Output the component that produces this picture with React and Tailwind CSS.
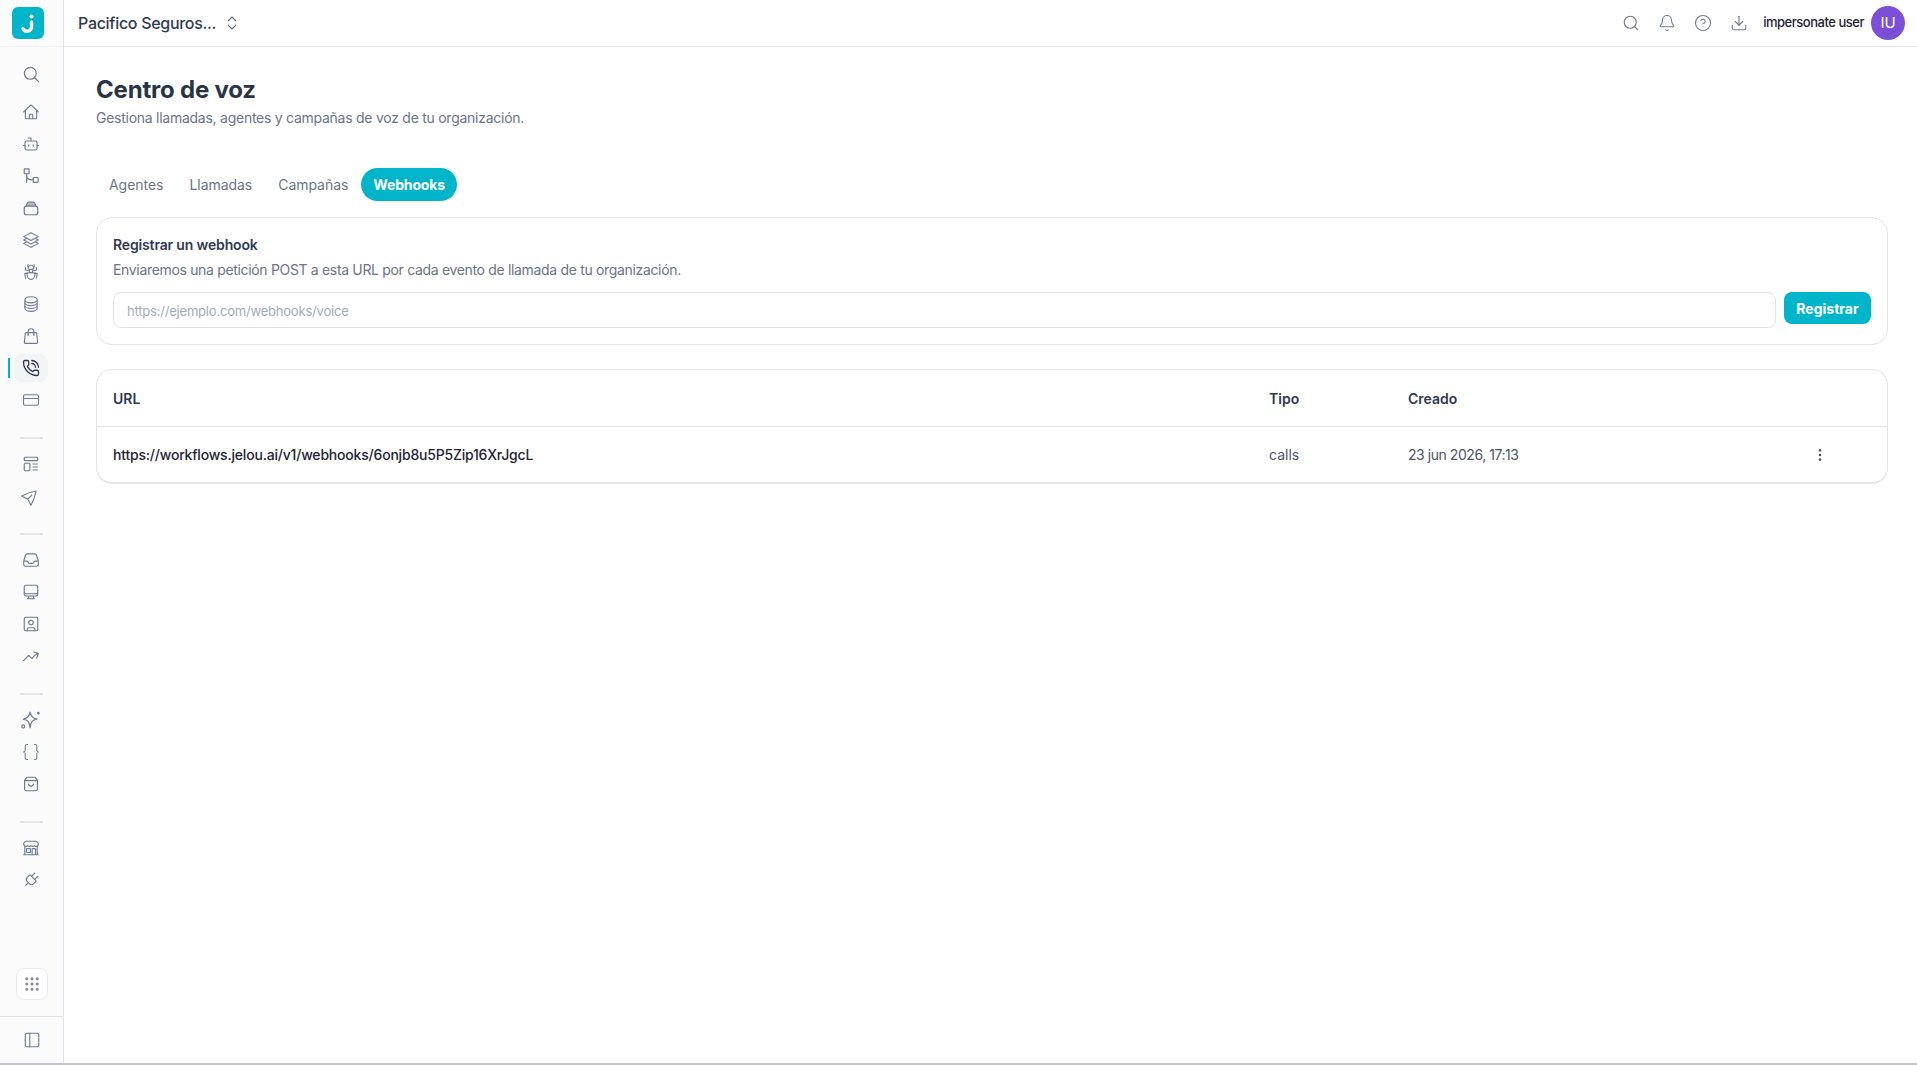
import { Search, Bell, CircleHelp, Download, ChevronsUpDown, Bot, Braces, Plug, PanelLeft, Grip, EllipsisVertical, PhoneCall, CreditCard, SquareUser } from 'lucide-react';
import {
  HiOutlineMagnifyingGlass, HiOutlineHome, HiOutlineSquare3Stack3D, HiOutlineBugAnt, HiOutlineCircleStack,
  HiOutlineShoppingBag, HiOutlinePaperAirplane, HiOutlineInbox, HiOutlineComputerDesktop,
  HiOutlineArrowTrendingUp, HiOutlineBuildingStorefront,
} from 'react-icons/hi2';

function FlowIcon(props) {
  return (
    <svg viewBox="0 0 24 24" fill="none" stroke="currentColor" strokeWidth="1.6" {...props}>
      <rect x="3" y="2.5" width="6.5" height="6.5" rx="0.8" />
      <rect x="15" y="14" width="6.5" height="6.5" rx="0.8" />
      <path d="M6.200 9v12M6.200 12c0 3 3 5.200 8.800 5.200" />
    </svg>
  );
}

function StackBoxIcon(props) {
  return (
    <svg viewBox="0 0 24 24" fill="none" stroke="currentColor" strokeWidth="1.6" {...props}>
      <rect x="3" y="9.500" width="18" height="11.500" rx="3" />
      <path d="M5.500 9.500 7 5.500A2 2 0 0 1 8.900 4h6.200A2 2 0 0 1 17 5.500l1.500 4" fill="currentColor" fillOpacity="0.5" />
    </svg>
  );
}

function TemplateIcon(props) {
  return (
    <svg viewBox="0 0 24 24" fill="none" stroke="currentColor" strokeWidth="1.6" {...props}>
      <rect x="3" y="3" width="18" height="4.500" rx="1.200" />
      <rect x="3" y="11" width="7.500" height="10" rx="1.200" />
      <path d="M14 12h7M14 16h7M14 20h7" />
    </svg>
  );
}

function CartBagIcon(props) {
  return (
    <svg viewBox="0 0 24 24" fill="none" stroke="currentColor" strokeWidth="1.600" {...props}>
      <path d="M3.500 7 6.500 3h11l3 4v12a2 2 0 0 1-2 2h-13a2 2 0 0 1-2-2Z" />
      <path d="M3.500 7.500h17M8.500 11.500c.4 2.200 1.800 3.200 3.500 3.200s3.100-1 3.500-3.200" />
    </svg>
  );
}

function SparkleIcon(props) {
  return (
    <svg viewBox="0 0 24 24" fill="none" stroke="currentColor" strokeWidth="1.300" strokeLinejoin="round" {...props}>
      <path d="M11 3.500c.7 4.800 2.700 6.800 7.500 7.500-4.800.7-6.800 2.700-7.500 9.500-.7-6.800-2.700-8.800-7.500-9.500 4.800-.7 6.800-2.700 7.500-7.500Z" />
      <circle cx="20" cy="4.500" r="1.400" fill="currentColor" stroke="none" />
      <circle cx="3.500" cy="19" r="1.600" />
    </svg>
  );
}

function JelouLogo() {
  return (
    <div className="mr-[7px] w-8 h-8 rounded-md bg-[#00b5c9] flex items-center justify-center">
      <svg viewBox="0 0 32 32" className="w-8 h-8" fill="none" stroke="white" strokeWidth="3.400" strokeLinecap="round">
        <circle cx="19.500" cy="9.500" r="2" fill="white" stroke="none" />
        <path d="M19.500 15v5a4.500 4.500 0 0 1-8.500 1.800" />
      </svg>
    </div>
  );
}

const groups = [
  [
    { Icon: HiOutlineHome },
    { Icon: Bot, stroke: 1.5 },
    { Icon: FlowIcon },
    { Icon: StackBoxIcon },
    { Icon: HiOutlineSquare3Stack3D },
    { Icon: HiOutlineBugAnt },
    { Icon: HiOutlineCircleStack },
    { Icon: HiOutlineShoppingBag },
    { Icon: PhoneCall, stroke: 1.75, active: true },
    { Icon: CreditCard, stroke: 1.5 },
  ],
  [{ Icon: TemplateIcon }, { Icon: HiOutlinePaperAirplane, cls: 'w-[18px] h-[18px] -rotate-45' }],
  [
    { Icon: HiOutlineInbox },
    { Icon: HiOutlineComputerDesktop },
    { Icon: SquareUser, stroke: 1.5 },
    { Icon: HiOutlineArrowTrendingUp },
  ],
  [
    { Icon: SparkleIcon, cls: 'w-[22px] h-[22px]' },
    { Icon: Braces, stroke: 1.25, cls: 'w-5 h-5' },
    { Icon: CartBagIcon },
  ],
  [{ Icon: HiOutlineBuildingStorefront }, { Icon: Plug, stroke: 1.5, cls: 'w-[18px] h-[18px] rotate-45' }],
];

function NavItem({ Icon, stroke, active, cls }) {
  const extra = stroke ? { strokeWidth: stroke } : {};
  return (
    <div className="relative h-8 flex items-center justify-center pr-px">
      {active && <span className="absolute left-2 top-[6px] w-0.5 h-5 bg-[#00b5c9]" />}
      <div className={active ? 'w-[34px] h-7 rounded-lg bg-[#f3f4f6] flex items-center justify-center text-[#2c3650]' : 'w-[34px] h-7 flex items-center justify-center text-[#6f7a98]'}>
        <Icon className={cls || 'w-[18px] h-[18px]'} {...extra} />
      </div>
    </div>
  );
}

function Sidebar() {
  return (
    <aside className="w-16 shrink-0 flex flex-col border-r border-[#e1e3e9] bg-[#fbfbfc]">
      <div className="h-[47px] shrink-0 flex items-center justify-center border-b border-[#f0f1f4]">
        <JelouLogo />
      </div>
      <div className="mt-[11px] h-8 shrink-0 flex items-center justify-center text-[#6f7a98]">
        <HiOutlineMagnifyingGlass className="w-[19px] h-[19px]" />
      </div>
      <div className="mt-1.5 flex flex-col">
        {groups.map((group, i) => (
          <div key={i}>
            {i > 0 && <div className="mt-[21px] mb-[9px] mx-5 h-0.5 bg-[#e3e4e9]" />}
            {group.map((item, j) => <NavItem key={j} {...item} />)}
          </div>
        ))}
      </div>
      <div className="mt-auto flex justify-center pb-4">
        <button className="w-8 h-8 rounded-lg border border-[#e8eaf0] bg-white flex items-center justify-center text-[#7f89a5]">
          <Grip className="w-[18px] h-[18px]" strokeWidth={2} />
        </button>
      </div>
      <div className="h-[47px] shrink-0 border-t border-[#e1e3e9] flex items-center justify-center text-[#6f7a98]">
        <PanelLeft className="w-[18px] h-[18px]" strokeWidth={1.5} />
      </div>
    </aside>
  );
}

function Header() {
  return (
    <header className="h-[47px] shrink-0 border-b border-[#e1e3e9] flex items-center justify-between pl-[14px] pr-3 bg-white">
      <div className="flex items-center gap-[7px] text-[#2f3a50]">
        <span className="text-[16px] font-medium tracking-[-0.3px]">Pacifico Seguros...</span>
        <ChevronsUpDown className="w-[18px] h-[18px] text-[#5f6b85]" strokeWidth={1.5} />
      </div>
      <div className="flex items-center">
        <div className="flex items-center gap-[18px] text-[#6f7a98]">
          <Search className="w-[18px] h-[18px]" strokeWidth={1.5} />
          <Bell className="w-[18px] h-[18px]" strokeWidth={1.5} />
          <CircleHelp className="w-[18px] h-[18px]" strokeWidth={1.5} />
          <Download className="w-[18px] h-[18px]" strokeWidth={1.5} />
        </div>
        <span className="ml-[15px] text-[13px] font-medium tracking-[-0.48px] text-[#1c2433]">impersonate user</span>
        <div className="ml-[7px] w-[34px] h-[34px] rounded-full bg-[#7c4fd9] flex items-center justify-center text-white text-[15px]">IU</div>
      </div>
    </header>
  );
}

function Tabs() {
  return (
    <div className="mt-10 h-[33px] flex items-center text-[14px] tracking-[-0.04px] text-[#6b7488]">
      <span className="px-[13px]">Agentes</span>
      <span className="px-[13px]">Llamadas</span>
      <span className="px-[13px]">Campañas</span>
      <span className="h-[33px] px-3 rounded-full bg-[#00b5c9] text-white font-bold tracking-[-0.15px] flex items-center">Webhooks</span>
    </div>
  );
}

function RegisterCard() {
  return (
    <section className="mt-4 h-[128px] rounded-2xl border border-[#e4e5ea] px-4 pt-[17px]">
      <h2 className="text-[14px] font-semibold leading-5 tracking-[-0.15px] text-[#2f3a50]">Registrar un webhook</h2>
      <p className="mt-[5px] text-[14px] leading-5 tracking-[-0.33px] text-[#6b7488]">Enviaremos una petición POST a esta URL por cada evento de llamada de tu organización.</p>
      <div className="mt-3 flex items-start gap-2">
        <input
          placeholder="https://ejemplo.com/webhooks/voice"
          className="flex-1 h-9 rounded-lg border border-[#e1e3e9] px-[13px] pt-0.5 text-[13px] tracking-[-0.2px] outline-none placeholder:text-[#a5abb8]"
        />
        <button className="h-8 w-[87px] rounded-lg bg-[#00b5c9] text-white text-[14px] font-bold">Registrar</button>
      </div>
    </section>
  );
}

function WebhooksTable() {
  return (
    <section className="mt-6 h-[115px] rounded-2xl border border-[#e4e5ea] border-b-2 flex flex-col">
      <div className="h-[57px] shrink-0 border-b border-[#e4e5ea] grid grid-cols-[1156px_139px_1fr] items-center pl-4 text-[14px] font-semibold text-[#2f3a50]">
        <span>URL</span>
        <span>Tipo</span>
        <span>Creado</span>
      </div>
      <div className="flex-1 grid grid-cols-[1156px_139px_1fr_auto] items-center pl-4 pr-[59px] text-[14px]">
        <span className="font-medium tracking-[-0.2px] text-[#1c2433]">https://workflows.jelou.ai/v1/webhooks/6onjb8u5P5Zip16XrJgcL</span>
        <span className="text-[#4b5568]">calls</span>
        <span className="tracking-[-0.45px] text-[#4b5568]">23 jun 2026, 17:13</span>
        <EllipsisVertical className="w-4 h-4 text-[#4b5568]" strokeWidth={2} />
      </div>
    </section>
  );
}

export default function App() {
  return (
    <div className="h-[1065px] bg-white font-['Inter',sans-serif]">
      <div className="h-full flex border-b-2 border-[#c4c5ca]">
        <Sidebar />
        <div className="flex-1 min-w-0 flex flex-col">
          <Header />
          <main className="flex-1 pl-8 pr-[29px] pt-[27px]">
            <h1 className="text-[24px] leading-8 font-bold tracking-[-0.2px] text-[#2a3447]">Centro de voz</h1>
            <p className="mt-0.5 text-[14px] leading-5 tracking-[-0.26px] text-[#6b7488]">Gestiona llamadas, agentes y campañas de voz de tu organización.</p>
            <Tabs />
            <RegisterCard />
            <WebhooksTable />
          </main>
        </div>
      </div>
    </div>
  );
}
